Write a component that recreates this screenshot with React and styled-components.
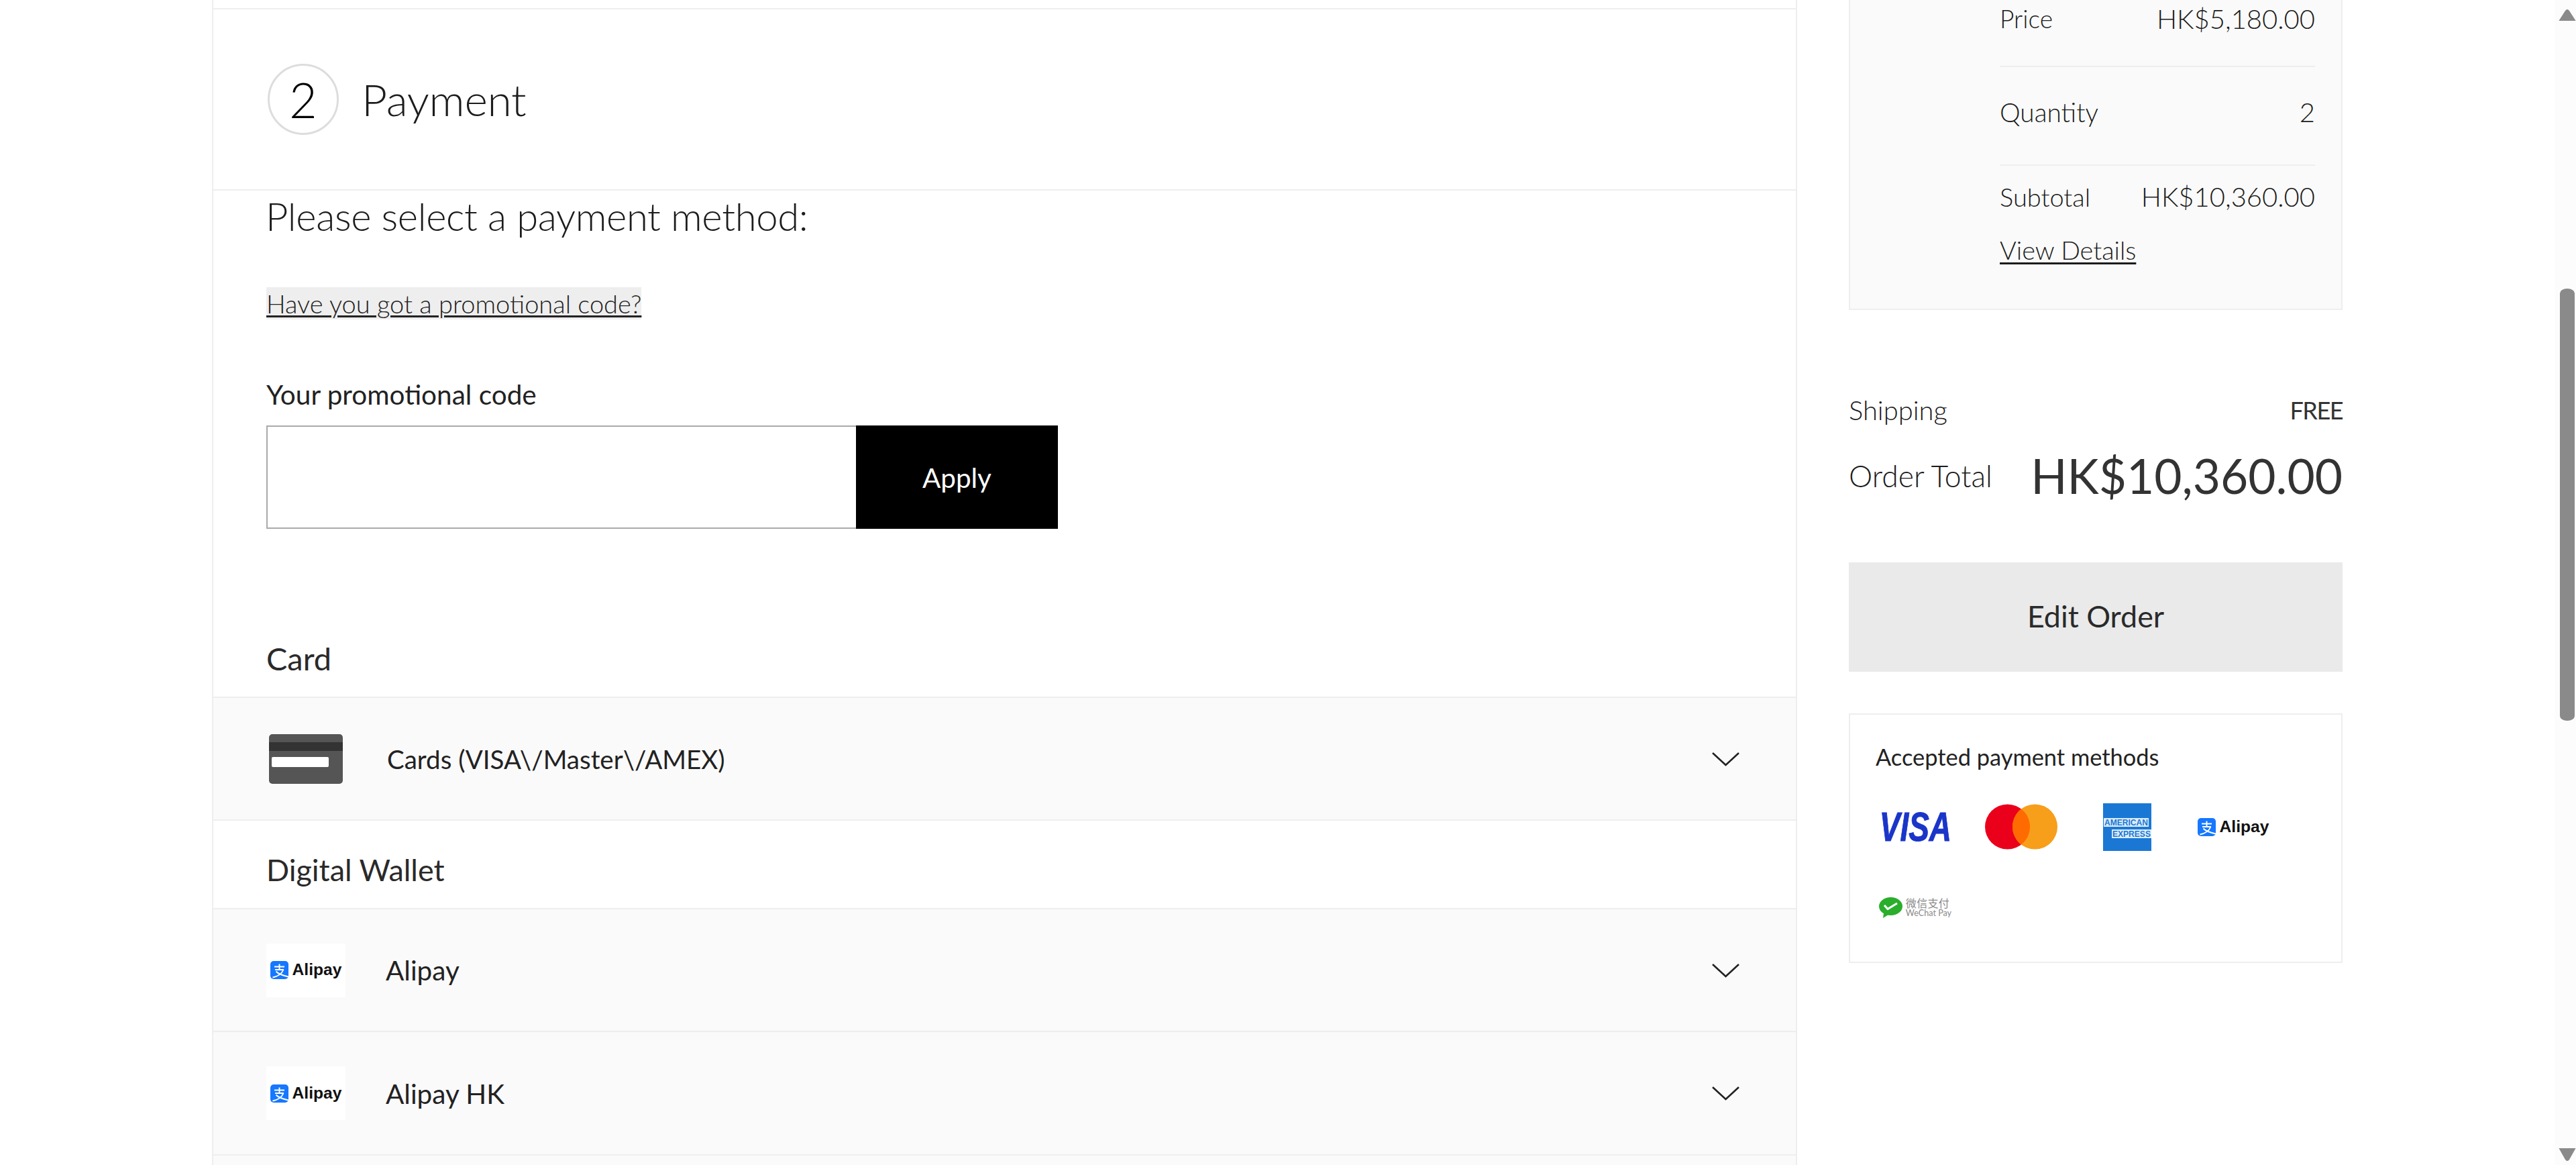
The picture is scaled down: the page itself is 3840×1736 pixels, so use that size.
import React from 'react';
import styled, { createGlobalStyle } from 'styled-components';

const Global = createGlobalStyle`
  html, body { margin: 0; padding: 0; height: 1736px; overflow: hidden; background: #fff; }
  body { font-family: "Lato", "Noto Sans", sans-serif; color: #222; }
  #root { height: 1736px; }
  * { box-sizing: border-box; }
`;

const Page = styled.div`display:flex;height:1736px;overflow:hidden;`;
const Viewport = styled.div`flex:1;display:flex;align-items:flex-start;padding-left:316px;min-width:0;`;

const CheckoutPanel = styled.main`
  width:2363px;height:1736px;flex:none;display:flex;flex-direction:column;
  border-left:2px solid #eee;border-right:2px solid #eee;padding-top:12px;
`;
const SectionHeader = styled.header`
  height:272px;flex:none;display:flex;align-items:center;gap:34px;padding-left:81px;
  border-top:2px solid #eee;border-bottom:2px solid #eee;
`;
const StepCircle = styled.div`
  width:106px;height:106px;border:3px solid #ddd;border-radius:50%;display:flex;align-items:center;justify-content:center;
  font-weight:300;font-size:72px;line-height:1;color:#000;
`;
const SectionTitle = styled.h2`margin:0;font-weight:300;font-size:66px;letter-spacing:-.3px;line-height:80px;color:#1c1c1c;`;
const PaymentPrompt = styled.h3`
  margin:8px 0 0 78px;font-weight:300;font-size:58px;letter-spacing:-.35px;line-height:60px;color:#1c1c1c;
`;
const PromoToggle = styled.a`
  display:block;width:max-content;margin:76px 0 0 79px;height:48px;line-height:48px;background:#eee;
  font-weight:300;font-size:38px;color:#222;text-decoration:underline;text-decoration-thickness:3px;text-underline-offset:3px;
`;
const FieldLabel = styled.label`display:block;margin:87px 0 0 79px;font-size:40.5px;line-height:50px;color:#222;`;
const PromoForm = styled.div`display:flex;margin:21px 0 0 79px;width:1180px;height:154px;`;
const PromoInput = styled.input`flex:1;min-width:0;height:100%;border:2px solid #aaa;border-right:none;background:#fff;outline:none;`;
const ApplyButton = styled.button`
  width:301px;height:100%;border:none;background:#000;color:#fff;font-family:inherit;font-size:40.4px;
`;
const GroupTitle = styled.div`margin:163px 0 27px 79px;height:60px;font-size:46.9px;line-height:60px;color:#2a2a2a;`;
const WalletHeading = styled.div`height:130px;padding:15px 0 0 79px;display:flex;align-items:center;font-size:44.9px;color:#2a2a2a;`;
const MethodRow = styled.div`
  height:${p=>p.$top?185:184}px;flex:none;display:flex;align-items:center;padding:0 84px 0 79px;background:#fafafa;
  border-bottom:2px solid #eee;${p=>p.$top?'border-top:2px solid #eee;':''}
`;
const MethodIconSlot = styled.div`width:118px;height:80px;flex:none;display:flex;align-items:center;justify-content:center;background:${p=>p.$white?'#fff':'transparent'};`;
const MethodName = styled.span`margin-left:${p=>p.$gap||60}px;flex:1;font-size:${p=>p.$size||40.5}px;color:#222;`;
const RestOfList = styled.div`flex:1;background:#fafafa;`;

const SideColumn = styled.aside`width:736px;flex:none;margin-left:77px;`;
const SummaryCard = styled.section`
  height:462px;background:#fafafa;border:2px solid #eee;border-top:none;padding-left:223px;padding-right:39px;
`;
const SummaryRow = styled.div`
  display:flex;justify-content:space-between;align-items:center;line-height:48px;height:${p=>p.$h}px;padding-top:${p=>p.$pt}px;padding-bottom:${p=>p.$pb}px;
  border-bottom:${p=>p.$line?'2px solid #eee':'none'};
`;
const SummaryLabel = styled.span`font-weight:300;font-size:${p=>p.$size}px;color:#1c1c1c;`;
const SummaryValue = styled.span`font-weight:300;font-size:${p=>p.$size||40}px;color:#1c1c1c;`;
const DetailsLink = styled.a`
  display:block;margin-top:32px;font-weight:300;font-size:37.8px;line-height:48px;color:#1c1c1c;width:max-content;
  text-decoration:underline;text-decoration-thickness:3px;text-underline-offset:4px;
`;
const ShippingRow = styled.div`
  margin-top:125px;display:flex;justify-content:space-between;line-height:48px;
`;
const ShippingLabel = styled.span`font-weight:300;font-size:39.9px;color:#1c1c1c;`;
const ShippingValue = styled.span`font-weight:400;font-size:36px;letter-spacing:-1.5px;color:#333;`;
const TotalRow = styled.div`margin-top:28px;height:90px;display:flex;justify-content:space-between;align-items:center;`;
const TotalLabel = styled.span`font-weight:300;font-size:44.5px;color:#1c1c1c;`;
const TotalValue = styled.span`font-size:71.2px;color:#333;`;
const EditButton = styled.button`
  display:block;width:100%;height:163px;margin-top:85px;padding-bottom:4px;border:none;background:#eaeaea;color:#2a2a2a;font-family:inherit;font-size:44.8px;
`;
const AcceptedBox = styled.section`
  margin-top:62px;height:372px;border:2px solid #eee;padding:41px 0 0 38px;
`;
const AcceptedTitle = styled.div`font-size:34.4px;line-height:44px;color:#222;`;
const LogoGrid = styled.div`display:flex;flex-wrap:wrap;gap:40px;margin-top:42px;`;
const LogoSlot = styled.div`width:118px;height:80px;display:flex;align-items:center;justify-content:center;`;
const AlipayMark = styled.div`display:flex;align-items:center;gap:6px;`;
const AlipayWord = styled.span`font-family:"Liberation Sans",sans-serif;font-weight:700;font-size:24.6px;line-height:1;color:#111;`;
const WeChatMark = styled.div`display:flex;align-items:center;gap:5px;`;
const WeChatWords = styled.div`display:flex;flex-direction:column;color:#8a8a8a;`;
const WeChatCn = styled.span`font-family:"Noto Sans CJK SC",sans-serif;font-size:16px;line-height:17px;letter-spacing:.3px;`;
const WeChatEn = styled.span`font-family:"Lato",sans-serif;font-size:12.6px;line-height:14px;`;
const VisaWord = styled.span`
  display:inline-block;font-family:"Liberation Sans",sans-serif;font-weight:700;font-style:italic;font-size:62px;line-height:46px;
  color:#1a35c8;-webkit-text-stroke:1px #1a35c8;transform:scaleX(.74);
`;
const VisaMark = styled.div`width:111px;display:flex;justify-content:center;`;

const Scrollbar = styled.div`
  width:32px;flex:none;height:1736px;background:#fcfcfc;padding:13px 0 5px 5px;display:flex;flex-direction:column;align-items:center;
`;
const ScrollThumb = styled.div`width:22px;height:644px;margin-top:399px;background:#8a8a8a;border-radius:11px / 7px;`;
const ScrollSpacer = styled.div`flex:1;`;

const Chevron = () => (
  <svg width="41" height="22" viewBox="0 0 41 22" fill="none">
    <path d="M1 2 L20.5 20 L40 2" stroke="#222" strokeWidth="2.6" />
  </svg>
);
const CardIcon = () => (
  <svg width="110" height="74" viewBox="0 0 110 74">
    <rect width="110" height="74" rx="5" fill="#555" />
    <rect y="12" width="110" height="13" fill="#333" />
    <rect x="4" y="34" width="85" height="15" rx="2" fill="#fff" />
  </svg>
);
const AlipayGlyph = () => (
  <svg width="27" height="27" viewBox="0 0 27 27" fill="none">
    <rect width="27" height="27" rx="5" fill="#1677ff" />
    <path d="M6 8.5H21M13.5 4.5V13M7 13H20M19.5 13C17 19 11 23 3.5 24.5M8.5 15.5C12 19.5 18 21.5 27 23.5" stroke="#fff" strokeWidth="1.9" />
  </svg>
);
const Alipay = () => (
  <AlipayMark><AlipayGlyph /><AlipayWord>Alipay</AlipayWord></AlipayMark>
);
const VisaLogo = () => (
  <VisaMark><VisaWord>VISA</VisaWord></VisaMark>
);
const MastercardLogo = () => (
  <svg width="108" height="68" viewBox="0 0 108 68">
    <circle cx="33.5" cy="34" r="33.5" fill="#eb001b" />
    <circle cx="74.5" cy="34" r="33.5" fill="#f79e1b" />
    <path d="M54 7.5A33.5 33.5 0 0 1 54 60.5A33.5 33.5 0 0 1 54 7.5Z" fill="#ff6b00" />
  </svg>
);
const AmexLogo = () => (
  <svg width="72" height="71" viewBox="0 0 72 71">
    <rect width="72" height="71" fill="#1a78d4" />
    <rect x="1" y="22" width="67" height="13" fill="#dcecfa" />
    <rect x="13" y="39" width="59" height="13" fill="#dcecfa" />
    <text transform="translate(2 33) scale(.928 1)" fontFamily="Liberation Sans" fontWeight="700" fontSize="13" fill="#1a78d4">AMERICAN</text>
    <text transform="translate(14 50) scale(.928 1)" fontFamily="Liberation Sans" fontWeight="700" fontSize="13" fill="#1a78d4">EXPRESS</text>
  </svg>
);
const WeChatLogo = () => (
  <WeChatMark>
    <svg width="35" height="31" viewBox="0 0 35 31">
      <ellipse cx="17.5" cy="13.5" rx="17.5" ry="13.5" fill="#2aae2b" />
      <path d="M7 24L6 31L14 26Z" fill="#2aae2b" />
      <path d="M8 12L13 17.5L27 9" fill="none" stroke="#fff" strokeWidth="3" />
    </svg>
    <WeChatWords><WeChatCn>微信支付</WeChatCn><WeChatEn>WeChat Pay</WeChatEn></WeChatWords>
  </WeChatMark>
);
const ArrowUp = () => (
  <svg width="26" height="18" viewBox="0 0 26 18"><path d="M1 18H25Q26 18 25 17L16 3Q13 -1 10 3L1 17Q0 18 1 18Z" fill="#8a8a8a" /></svg>
);
const ArrowDown = () => (
  <svg width="26" height="20" viewBox="0 0 26 20"><path d="M1 0H25Q26 0 25 1L16 17Q13 21 10 17L1 1Q0 0 1 0Z" fill="#8a8a8a" /></svg>
);

const PaymentMethod = ({ icon, white, name, size, gap, top }) => (
  <MethodRow $top={top}>
    <MethodIconSlot $white={white}>{icon}</MethodIconSlot>
    <MethodName $size={size} $gap={gap}>{name}</MethodName>
    <Chevron />
  </MethodRow>
);

export default function App() {
  return (
    <>
      <Global />
      <Page>
        <Viewport>
          <CheckoutPanel>
            <SectionHeader>
              <StepCircle>2</StepCircle>
              <SectionTitle>Payment</SectionTitle>
            </SectionHeader>
            <PaymentPrompt>Please select a payment method:</PaymentPrompt>
            <PromoToggle>Have you got a promotional code?</PromoToggle>
            <FieldLabel>Your promotional code</FieldLabel>
            <PromoForm>
              <PromoInput aria-label="Your promotional code" />
              <ApplyButton>Apply</ApplyButton>
            </PromoForm>
            <GroupTitle>Card</GroupTitle>
            <PaymentMethod top icon={<CardIcon />} name="Cards (VISA\/Master\/AMEX)" size={38.5} gap={62} />
            <WalletHeading>Digital Wallet</WalletHeading>
            <PaymentMethod top white icon={<Alipay />} name="Alipay" />
            <PaymentMethod white icon={<Alipay />} name="Alipay HK" />
            <RestOfList />
          </CheckoutPanel>
          <SideColumn>
            <SummaryCard>
              <SummaryRow $h={100} $pt={4} $pb={46} $line>
                <SummaryLabel $size={37.2}>Price</SummaryLabel>
                <SummaryValue>HK$5,180.00</SummaryValue>
              </SummaryRow>
              <SummaryRow $h={147} $pt={43} $pb={54} $line>
                <SummaryLabel $size={38.8}>Quantity</SummaryLabel>
                <SummaryValue>2</SummaryValue>
              </SummaryRow>
              <SummaryRow $h={70} $pt={22} $pb={0}>
                <SummaryLabel $size={38}>Subtotal</SummaryLabel>
                <SummaryValue>HK$10,360.00</SummaryValue>
              </SummaryRow>
              <DetailsLink>View Details</DetailsLink>
            </SummaryCard>
            <ShippingRow>
              <ShippingLabel>Shipping</ShippingLabel>
              <ShippingValue>FREE</ShippingValue>
            </ShippingRow>
            <TotalRow>
              <TotalLabel>Order Total</TotalLabel>
              <TotalValue>HK$10,360.00</TotalValue>
            </TotalRow>
            <EditButton>Edit Order</EditButton>
            <AcceptedBox>
              <AcceptedTitle>Accepted payment methods</AcceptedTitle>
              <LogoGrid>
                <LogoSlot><VisaLogo /></LogoSlot>
                <LogoSlot><MastercardLogo /></LogoSlot>
                <LogoSlot><AmexLogo /></LogoSlot>
                <LogoSlot><Alipay /></LogoSlot>
                <LogoSlot><WeChatLogo /></LogoSlot>
              </LogoGrid>
            </AcceptedBox>
          </SideColumn>
        </Viewport>
        <Scrollbar>
          <ArrowUp />
          <ScrollThumb />
          <ScrollSpacer />
          <ArrowDown />
        </Scrollbar>
      </Page>
    </>
  );
}
